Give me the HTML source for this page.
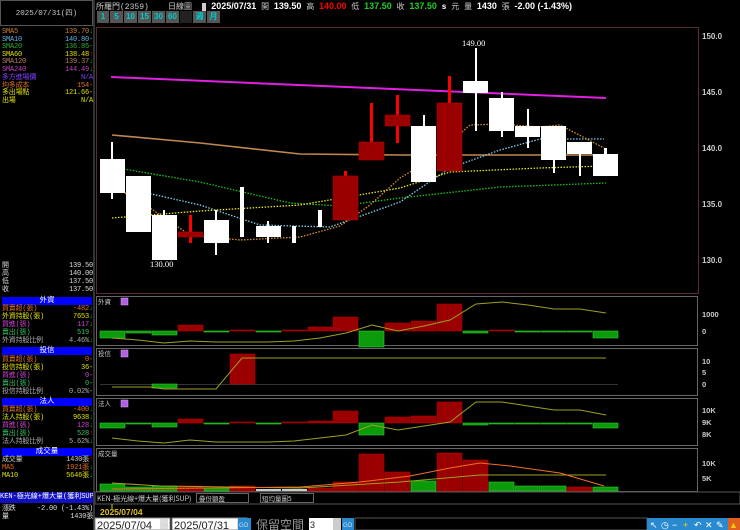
<!DOCTYPE html>
<html><head><meta charset="utf-8">
<style>
body{margin:0;background:#000;width:740px;height:530px;overflow:hidden;position:relative;font-family:"Liberation Mono","Noto Sans CJK TC",monospace;font-size:8px;color:#ddd}
.a{position:absolute;white-space:nowrap}
.row{position:absolute;left:2px;width:91px;height:8px;line-height:8px;display:flex;justify-content:space-between;font-size:7px;letter-spacing:-0.2px}
.row b{font-size:7px}
.hd{position:absolute;left:2px;width:90px;height:8px;background:#0000ff;color:#fff;text-align:center;line-height:8px;font-size:7.5px}
.up{color:#f00}.dn{color:#0c0}
</style></head><body>
<div class="a" style="left:0;top:0;width:93px;height:26px;border:1px solid #555;box-sizing:border-box;text-align:center;line-height:26px;color:#ccc;font-size:7.5px">2025/07/31(四)</div>
<div class="a" style="left:93px;top:0;width:2px;height:530px;background:#333"></div>
<div class="row" style="top:28px;color:#d08030"><span>SMA5</span><span>139.70<b class="dn">↓</b></span></div>
<div class="row" style="top:36px;color:#60b8e8"><span>SMA10</span><span>140.80-</span></div>
<div class="row" style="top:43px;color:#30b030"><span>SMA20</span><span>136.85-</span></div>
<div class="row" style="top:51px;color:#e0e000"><span>SMA60</span><span>138.48<b class="up">↑</b></span></div>
<div class="row" style="top:58px;color:#c08060"><span>SMA120</span><span>139.37<b class="dn">↓</b></span></div>
<div class="row" style="top:66px;color:#c040c0"><span>SMA240</span><span>144.49<b class="dn">↓</b></span></div>
<div class="row" style="top:74px;color:#8040ff"><span>多方進場價</span><span>N/A</span></div>
<div class="row" style="top:82px;color:#e07020"><span>均多成本</span><span>154-</span></div>
<div class="row" style="top:89px;color:#e0e000"><span>多出場點</span><span>121.66-</span></div>
<div class="row" style="top:97px;color:#e0e000"><span>出場</span><span>N/A</span></div>
<div class="row" style="top:262px"><span>開</span><span>139.50</span></div>
<div class="row" style="top:270px"><span>高</span><span>140.00</span></div>
<div class="row" style="top:278px"><span>低</span><span>137.50</span></div>
<div class="row" style="top:286px"><span>收</span><span>137.50</span></div>
<div class="hd" style="top:297px">外資</div>
<div class="row" style="top:305px;color:#e07020"><span>買賣超(張)</span><span>-482<b class="dn">↓</b></span></div>
<div class="row" style="top:313px;color:#e0e000"><span>外資持股(張)</span><span>7653<b class="dn">↓</b></span></div>
<div class="row" style="top:321px;color:#d040d0"><span>買進(張)</span><span>117<b class="dn">↓</b></span></div>
<div class="row" style="top:329px;color:#30c060"><span>賣出(張)</span><span>519<b class="up">↑</b></span></div>
<div class="row" style="top:337px;color:#aaa"><span>外資持股比例</span><span>4.46%<b class="dn">↓</b></span></div>
<div class="hd" style="top:347px">投信</div>
<div class="row" style="top:356px;color:#e07020"><span>買賣超(張)</span><span>0-</span></div>
<div class="row" style="top:364px;color:#e0e000"><span>投信持股(張)</span><span>36-</span></div>
<div class="row" style="top:372px;color:#d040d0"><span>買進(張)</span><span>0-</span></div>
<div class="row" style="top:380px;color:#30c060"><span>賣出(張)</span><span>0-</span></div>
<div class="row" style="top:388px;color:#aaa"><span>投信持股比例</span><span>0.02%-</span></div>
<div class="hd" style="top:398px">法人</div>
<div class="row" style="top:406px;color:#e07020"><span>買賣超(張)</span><span>-400<b class="dn">↓</b></span></div>
<div class="row" style="top:414px;color:#e0e000"><span>法人持股(張)</span><span>9638<b class="dn">↓</b></span></div>
<div class="row" style="top:422px;color:#d040d0"><span>買進(張)</span><span>128<b class="dn">↓</b></span></div>
<div class="row" style="top:430px;color:#30c060"><span>賣出(張)</span><span>528<b class="up">↑</b></span></div>
<div class="row" style="top:438px;color:#aaa"><span>法人持股比例</span><span>5.62%<b class="dn">↓</b></span></div>
<div class="hd" style="top:448px">成交量</div>
<div class="row" style="top:456px;color:#ccc"><span>成交量</span><span>1430張<b class="up">↑</b></span></div>
<div class="row" style="top:464px;color:#e07020"><span>MA5</span><span>1921張<b class="dn">↓</b></span></div>
<div class="row" style="top:472px;color:#e0e000"><span>MA10</span><span>5646張<b class="dn">↓</b></span></div>
<div class="a" style="left:0;top:492px;width:93px;height:11px;background:#1010c0;color:#fff;line-height:11px;font-size:7px;overflow:hidden">KEN-極光線+爆大量(獲利SUP)</div>
<div class="row" style="top:505px"><span>漲跌</span><span>-2.00 (-1.43%)</span></div>
<div class="row" style="top:513px"><span>量</span><span>1430張</span></div>

<div class="a" style="left:96px;top:1px;font-size:8px;color:#ccc;line-height:10px">所羅門(2359)&nbsp;&nbsp;&nbsp;&nbsp;日線圖&nbsp;&nbsp;<span style="background:#ccc">&nbsp;</span> <b style="color:#fff;font-family:'Liberation Sans';font-size:9px">2025/07/31</b> 開 <b style="color:#fff;font-family:'Liberation Sans';font-size:9px">139.50</b> 高 <b style="color:#f00;font-family:'Liberation Sans';font-size:9px">140.00</b> 低 <b style="color:#2c2;font-family:'Liberation Sans';font-size:9px">137.50</b> 收 <b style="color:#2c2;font-family:'Liberation Sans';font-size:9px">137.50</b> <b style="color:#fff">s</b> 元 量 <b style="color:#fff;font-family:'Liberation Sans';font-size:9px">1430</b> 張 <b style="color:#fff;font-family:'Liberation Sans';font-size:9px">-2.00 (-1.43%)</b></div>
<div class="a" style="left:97px;top:11px;height:12px;display:flex;font-family:'Liberation Sans';font-size:8px;font-weight:bold">
<span style="width:12px;background:#555;color:#0cc;text-align:center;line-height:12px;margin-right:1px">1</span>
<span style="width:13px;background:#555;color:#0cc;text-align:center;line-height:12px;margin-right:1px">5</span>
<span style="width:13px;background:#555;color:#0cc;text-align:center;line-height:12px;margin-right:1px">10</span>
<span style="width:13px;background:#555;color:#0cc;text-align:center;line-height:12px;margin-right:1px">15</span>
<span style="width:13px;background:#555;color:#0cc;text-align:center;line-height:12px;margin-right:1px">30</span>
<span style="width:13px;background:#555;color:#0cc;text-align:center;line-height:12px;margin-right:1px">60</span>
<span style="width:12px;background:#222;margin-right:1px"></span>
<span style="width:13px;background:#555;color:#0cc;text-align:center;line-height:12px;margin-right:1px">週</span>
<span style="width:13px;background:#555;color:#0cc;text-align:center;line-height:12px">月</span></div>

<svg class="a" style="left:0;top:0" width="740" height="530" font-family="Liberation Sans" font-size="8">
<rect x="96.5" y="27.5" width="602" height="266" fill="none" stroke="#5a2a3a"/>
<g fill="#ccc" font-weight="bold" font-size="8">
<text x="702" y="39">150.0</text><text x="702" y="95">145.0</text><text x="702" y="151">140.0</text><text x="702" y="207">135.0</text><text x="702" y="263">130.0</text></g>
<polyline points="111,77 606,98" stroke="#e020e0" stroke-width="2" fill="none"/>
<polyline points="112,135 200,143 300,154 400,155 606,155" stroke="#c08850" stroke-width="1.6" fill="none"/>
<g fill="none" stroke-width="1.3" stroke-dasharray="1.5,1.5">
<polyline points="112,167 200,182 290,203 340,206 400,198 500,187 606,183" stroke="#20c020"/>
<polyline points="112,185 200,205 260,225 330,227 400,202 450,168 500,150 540,139 604,139" stroke="#80d0f0"/>
<polyline points="112,218 200,211 300,205 400,188 450,172 540,168 604,166" stroke="#e8e820"/>
<polyline points="112,185 150,208 190,235 240,240 300,237 340,226 370,205 400,178 430,160 470,125 500,124 540,127 560,125 604,148" stroke="#e09030"/>
</g>
<g fill="#fff" stroke="none">
<rect x="111" y="142" width="2" height="57"/><rect x="100" y="159" width="25" height="34"/>
<rect x="126" y="176" width="25" height="56"/>
<rect x="163" y="210" width="2" height="6"/><rect x="152" y="215" width="25" height="45"/>
<rect x="215" y="210" width="2" height="45"/><rect x="204" y="220" width="25" height="23"/>
<rect x="240" y="187" width="4" height="50"/>
<rect x="267" y="221" width="2" height="22"/><rect x="256" y="226" width="25" height="11"/>
<rect x="292" y="226" width="4" height="17"/>
<rect x="318" y="210" width="4" height="17"/>
<rect x="423" y="115" width="2" height="12"/><rect x="411" y="126" width="25" height="56"/>
<rect x="475" y="48" width="2" height="83"/><rect x="463" y="81" width="25" height="12"/>
<rect x="501" y="92" width="2" height="45"/><rect x="489" y="98" width="25" height="33"/>
<rect x="527" y="109" width="2" height="39"/><rect x="515" y="126" width="25" height="11"/>
<rect x="553" y="126" width="2" height="47"/><rect x="541" y="126" width="25" height="34"/>
<rect x="579" y="142" width="2" height="34"/><rect x="567" y="142" width="25" height="12"/>
<rect x="604" y="148" width="3" height="6"/><rect x="593" y="154" width="25" height="22"/>
</g>
<g fill="#f00">
<rect x="189" y="215" width="3" height="28"/><rect x="344" y="171" width="3" height="6"/>
<rect x="370" y="103" width="3" height="57"/><rect x="396" y="95" width="3" height="48"/>
<rect x="448" y="76" width="3" height="28"/></g>
<g fill="#9a0000" stroke="#b00000" stroke-width="0.6">
<rect x="178" y="232" width="25" height="5"/><rect x="333" y="176" width="25" height="44"/>
<rect x="359" y="142" width="25" height="18"/><rect x="385" y="115" width="25" height="11"/>
<rect x="437" y="103" width="25" height="68"/></g>
<text x="150" y="267" fill="#fff" font-size="8.5" font-family="Liberation Serif">130.00</text>
<text x="462" y="46" fill="#fff" font-size="8.5" font-family="Liberation Serif">149.00</text>

<g fill="none" stroke="#666">
<rect x="96.5" y="296.5" width="601" height="49"/>
<rect x="96.5" y="348.5" width="601" height="47"/>
<rect x="96.5" y="398.5" width="601" height="47"/>
<rect x="96.5" y="448.5" width="601" height="43"/></g>
<g fill="#ccc" font-size="6.5" font-family="Noto Sans CJK TC">
<text x="98" y="304">外資</text><text x="98" y="356">投信</text><text x="98" y="406">法人</text><text x="98" y="456">成交量</text></g>
<g fill="#b060e0" stroke="#e0a0ff" stroke-width="0.5"><rect x="121" y="298" width="7" height="7"/><rect x="121" y="350" width="7" height="7"/><rect x="121" y="400" width="7" height="7"/></g>
<g fill="#ccc" font-weight="bold" font-size="7.5">
<text x="702" y="317">1000</text><text x="702" y="334">0</text>
<text x="702" y="364">10</text><text x="702" y="375">5</text><text x="702" y="387">0</text>
<text x="702" y="413">10K</text><text x="702" y="425">9K</text><text x="702" y="437">8K</text>
<text x="702" y="466">10K</text><text x="702" y="481">5K</text><text x="698" y="502">-10</text></g>
<line x1="100" y1="384.5" x2="618" y2="384.5" stroke="#333"/>
<g fill="#0a9a0a" stroke="#30d030" stroke-width="0.6">
<rect x="100" y="331" width="25" height="7"/><rect x="126" y="331" width="25" height="2"/><rect x="152" y="331" width="25" height="4"/>
<rect x="204" y="331" width="25" height="1"/><rect x="256" y="331" width="25" height="1"/><rect x="359" y="331" width="25" height="16"/>
<rect x="463" y="331" width="25" height="2"/><rect x="515" y="331" width="25" height="1"/><rect x="541" y="331" width="25" height="1"/><rect x="567" y="331" width="25" height="1"/><rect x="593" y="331" width="25" height="7"/>
<rect x="152" y="384" width="25" height="4"/>
<rect x="100" y="423" width="25" height="5"/><rect x="126" y="423" width="25" height="1"/><rect x="152" y="423" width="25" height="4"/>
<rect x="204" y="423" width="25" height="1"/><rect x="256" y="423" width="25" height="1"/><rect x="359" y="423" width="25" height="12"/>
<rect x="463" y="423" width="25" height="2"/><rect x="489" y="423" width="25" height="1"/><rect x="515" y="423" width="25" height="1"/><rect x="541" y="423" width="25" height="1"/><rect x="567" y="423" width="25" height="1"/><rect x="593" y="423" width="25" height="5"/>
<rect x="100" y="484" width="25" height="7"/><rect x="126" y="487" width="25" height="4"/><rect x="152" y="486" width="25" height="5"/><rect x="204" y="488" width="25" height="3"/>
<rect x="411" y="481" width="25" height="10"/><rect x="489" y="482" width="25" height="9"/><rect x="515" y="486" width="25" height="5"/><rect x="541" y="486" width="25" height="5"/><rect x="593" y="487" width="25" height="4"/>
</g>
<g fill="#9a0000" stroke="#b00000" stroke-width="0.6">
<rect x="178" y="325" width="25" height="6"/><rect x="230" y="330" width="25" height="1"/><rect x="282" y="330" width="25" height="1"/><rect x="308" y="327" width="25" height="4"/>
<rect x="333" y="317" width="25" height="14"/><rect x="385" y="323" width="25" height="8"/><rect x="411" y="321" width="25" height="10"/><rect x="437" y="304" width="25" height="27"/><rect x="489" y="330" width="25" height="1"/>
<rect x="230" y="354" width="25" height="30"/>
<rect x="178" y="419" width="25" height="4"/><rect x="230" y="422" width="25" height="1"/><rect x="282" y="422" width="25" height="1"/><rect x="308" y="421" width="25" height="2"/>
<rect x="333" y="411" width="25" height="12"/><rect x="385" y="417" width="25" height="6"/><rect x="411" y="416" width="25" height="7"/><rect x="437" y="402" width="25" height="21"/>
<rect x="178" y="486" width="25" height="5"/><rect x="230" y="486" width="25" height="5"/><rect x="308" y="488" width="25" height="3"/><rect x="333" y="482" width="25" height="9"/>
<rect x="359" y="454" width="25" height="37"/><rect x="385" y="472" width="25" height="19"/><rect x="437" y="453" width="25" height="38"/><rect x="463" y="460" width="25" height="31"/><rect x="567" y="487" width="25" height="4"/>
</g>
<g fill="#ccc"><rect x="256" y="489" width="25" height="2"/><rect x="282" y="489" width="25" height="2"/></g>
<g fill="none" stroke-width="1">
<polyline stroke="#a0a020" points="112,338 138,340 164,343 190,341 216,342 242,342 268,342 294,341 320,338 346,333 372,325 398,331 424,326 450,320 476,304 502,302 528,305 554,309 580,309 606,313"/>
<polyline stroke="#a0a020" points="112,387 150,387 164,389 216,389 216,389 242,358 606,358"/>
<polyline stroke="#a0a020" points="112,438 138,441 164,443 190,440 216,442 268,442 294,441 320,438 346,435 372,425 398,430 424,426 450,422 476,402 502,402 528,406 554,410 580,410 606,415"/>
<polyline stroke="#a0a020" points="112,483 160,486 300,488 400,482 480,475 606,475"/>
<polyline stroke="#f07020" points="112,489 300,487 360,482 410,476 450,468 480,463 510,466 560,473 604,486"/>
</g>
<rect x="95" y="492" width="645" height="12" fill="#000" stroke="#555"/>
<text x="97" y="501" fill="#ccc" font-size="7" font-family="Noto Sans CJK TC">KEN-極光線+爆大量(獲利SUP)</text>
<rect x="196.5" y="493.5" width="52" height="9" fill="#000" stroke="#666"/>
<text x="199" y="501" fill="#ccc" font-size="6.5" font-family="Noto Sans CJK TC">疊份額盈</text>
<rect x="260.5" y="493.5" width="53" height="9" fill="#000" stroke="#666"/>
<text x="262" y="501" fill="#ccc" font-size="6.5" font-family="Noto Sans CJK TC">短均量圖5</text>
<line x1="112" y1="504" x2="112" y2="509" stroke="#cc0"/>
<text x="100" y="515" fill="#e0c020" font-size="8.5" font-weight="bold">2025/07/04</text>
<rect x="95" y="518" width="75" height="12" fill="#fff" stroke="#888"/><text x="97" y="529" fill="#222" font-size="11">2025/07/04</text>
<rect x="160" y="519" width="8" height="10" fill="#ddd"/>
<text x="163" y="528" fill="#ccc" font-size="9">~</text>
<rect x="172" y="518" width="75" height="12" fill="#fff" stroke="#888"/><text x="174" y="529" fill="#222" font-size="11">2025/07/31</text>
<rect x="237" y="519" width="8" height="10" fill="#ddd"/>
<rect x="238" y="518" width="13" height="12" fill="#2a8ad0"/><text x="239" y="527" fill="#cde" font-size="6">GO</text>
<text x="256" y="529" fill="#999" font-size="12" font-family="Noto Sans CJK TC">保留空間</text>
<rect x="309" y="518" width="24" height="12" fill="#fff"/><text x="310" y="528" fill="#222" font-size="9">3</text>
<rect x="333" y="518" width="8" height="12" fill="#ccc"/>
<rect x="342" y="518" width="12" height="12" fill="#2a8ad0"/><text x="343" y="527" fill="#cde" font-size="6">GO</text>
<rect x="355" y="518" width="292" height="12" fill="#000" stroke="#555"/>
<rect x="647" y="518" width="93" height="12" fill="#2a8ad0"/>
<g fill="#fff" font-size="9"><text x="650" y="528">↖</text><text x="661" y="528">◷</text><text x="672" y="528">−</text><text x="683" y="528" fill="#fc0">+</text><text x="694" y="528">↶</text><text x="705" y="528">✕</text><text x="716" y="528">✎</text></g>
<rect x="728" y="518" width="12" height="12" fill="#e06020"/><text x="729" y="528" fill="#fc0" font-size="9">▲</text>
</svg>
</body></html>
